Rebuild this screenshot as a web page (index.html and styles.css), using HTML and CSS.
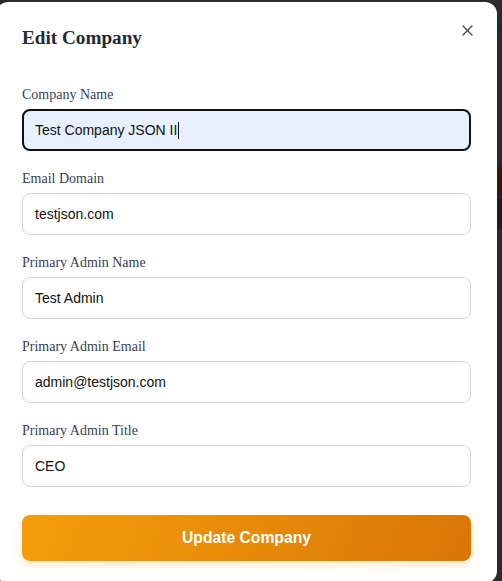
FILE: index.html
```html
<!DOCTYPE html>
<html>
<head>
<meta charset="utf-8">
<link rel="stylesheet" href="styles.css">
</head>
<body>
<div class="backdrop">
  <span class="bg-patch bg-green"></span>
  <span class="bg-patch bg-red"></span>
  <span class="bg-patch bg-navy"></span>
</div>
<div class="modal">
  <div class="modal-header">
    <h2 class="modal-title">Edit Company</h2>
    <button class="close-btn" aria-label="Close">
      <svg width="11" height="11" viewBox="0 0 11 11"><path d="M1 1L10 10M10 1L1 10" stroke="#444" stroke-width="1.3" fill="none" stroke-linecap="round"/></svg>
    </button>
  </div>
  <form class="form">
    <div class="field">
      <label class="label">Company Name</label>
      <div class="input input-focus">Test Company JSON II<span class="caret"></span></div>
    </div>
    <div class="field">
      <label class="label">Email Domain</label>
      <div class="input">testjson.com</div>
    </div>
    <div class="field">
      <label class="label">Primary Admin Name</label>
      <div class="input">Test Admin</div>
    </div>
    <div class="field">
      <label class="label">Primary Admin Email</label>
      <div class="input">admin@testjson.com</div>
    </div>
    <div class="field">
      <label class="label">Primary Admin Title</label>
      <div class="input">CEO</div>
    </div>
    <button type="button" class="submit">Update Company</button>
  </form>
</div>
</body>
</html>
```
FILE: styles.css
```css
html, body {
  margin: 0;
  padding: 0;
  width: 502px;
  height: 581px;
  overflow: hidden;
  background: #2b2b2b;
}
.backdrop {
  position: absolute;
  inset: 0;
}
.bg-patch {
  position: absolute;
  right: 0;
  width: 6px;
}
.bg-green { top: 18px; height: 17px; background: #163129; }
.bg-red { top: 167px; height: 29px; background: #3a1214; }
.bg-navy { top: 198px; height: 31px; background: #1c1a2e; }
.modal {
  position: relative;
  margin: 2px 0 0 -4px;
  width: 501px;
  height: 581px;
  box-sizing: border-box;
  background: #fff;
  border-radius: 12px;
  padding: 24px 26px 22px 26px;
}
.modal-header {
  display: flex;
  justify-content: space-between;
  align-items: flex-start;
}
.modal-title {
  margin: 0;
  font-family: "Liberation Serif", serif;
  font-size: 19.2px;
  line-height: 24px;
  font-weight: bold;
  color: #1f2937;
}
.close-btn {
  border: 0;
  background: none;
  padding: 0;
  margin: -1px -2px 0 0;
  width: 11px;
  height: 11px;
  display: flex;
}
.form {
  display: flex;
  flex-direction: column;
  margin-top: 36px;
}
.field {
  display: flex;
  flex-direction: column;
  margin-bottom: 19px;
}
.label {
  font-family: "Liberation Serif", serif;
  font-size: 14px;
  line-height: 17px;
  color: #374151;
  margin-bottom: 6px;
}
.input {
  height: 42px;
  box-sizing: border-box;
  border: 1px solid #d4d4dc;
  border-radius: 8px;
  padding: 0 12px;
  display: flex;
  align-items: center;
  font-family: "Liberation Sans", Arial, sans-serif;
  font-size: 14px;
  color: #111;
  background: #fff;
}
.input-focus {
  border: 2px solid #111;
  padding: 0 11px;
  background: #e8f0fe;
}
.caret {
  display: inline-block;
  width: 1px;
  height: 17px;
  background: #111;
  margin-left: 1px;
}
.submit {
  margin-top: 9px;
  height: 46px;
  border: 0;
  border-radius: 8px;
  background: linear-gradient(110deg, #f59e0b 0%, #d97706 100%);
  box-shadow: 0 4px 10px rgba(245, 158, 11, 0.25);
  color: #fff;
  font-family: "Liberation Sans", Arial, sans-serif;
  font-weight: bold;
  font-size: 15.7px;
}
```
